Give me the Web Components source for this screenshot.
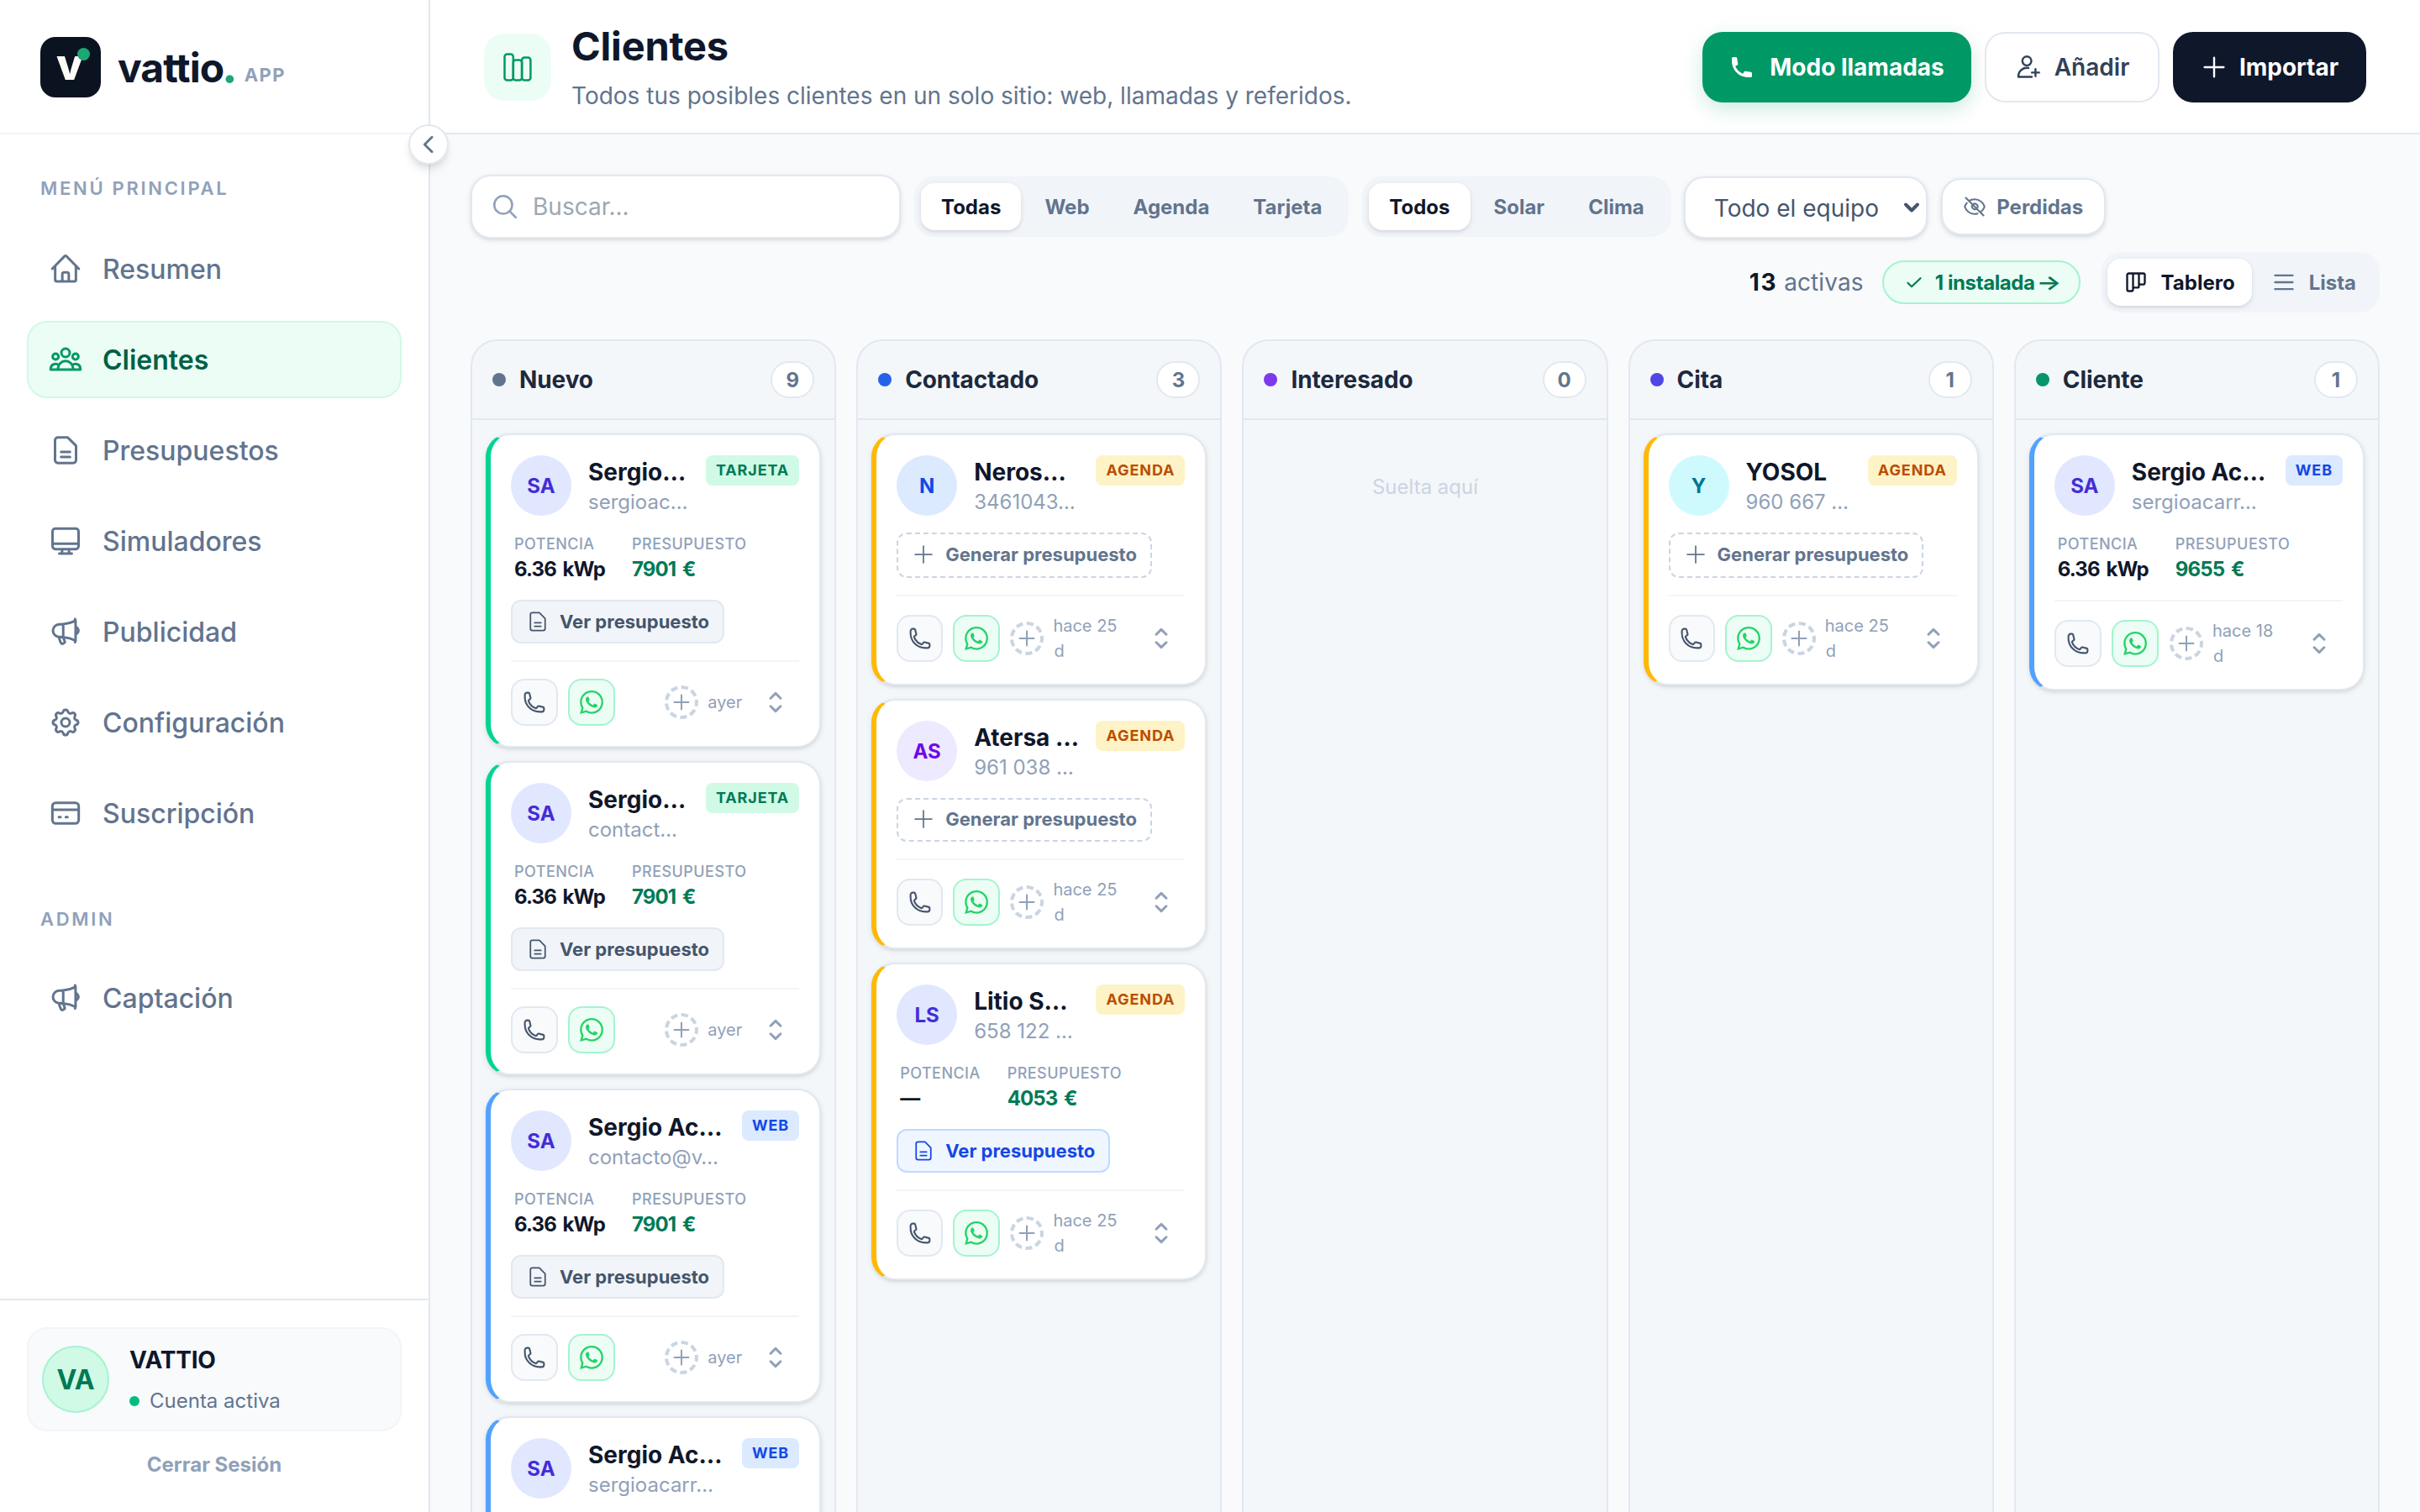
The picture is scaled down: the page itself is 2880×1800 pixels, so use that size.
<!DOCTYPE html>
<html lang="es">
<head>
<meta charset="UTF-8">
<title>Vattio App - Clientes</title>
<style>
    html, body {
        margin: 0;
        height: 100%;
    }

    body {
        background: #f8fafc;
        color: #0f172b;
        font-family: Inter, 'Liberation Sans', sans-serif;
        font-size: 28px;
        overflow: hidden;
    }
</style>
</head>
<body>
<vt-app>
    <vt-sidebar slot="sidebar">
        <vt-nav-label>MENÚ PRINCIPAL</vt-nav-label>
        <vt-nav-item icon="home">Resumen</vt-nav-item>
        <vt-nav-item icon="users" active>Clientes</vt-nav-item>
        <vt-nav-item icon="doc">Presupuestos</vt-nav-item>
        <vt-nav-item icon="monitor">Simuladores</vt-nav-item>
        <vt-nav-item icon="megaphone">Publicidad</vt-nav-item>
        <vt-nav-item icon="cog">Configuración</vt-nav-item>
        <vt-nav-item icon="card">Suscripción</vt-nav-item>
        <vt-nav-label class="admin">ADMIN</vt-nav-label>
        <vt-nav-item icon="megaphone">Captación</vt-nav-item>
    </vt-sidebar>

    <vt-header slot="header">
        <span slot="title">Clientes</span>
        <span slot="subtitle">Todos tus posibles clientes en un solo sitio: web, llamadas y referidos.</span>
        <vt-button icon="phoneSolid" kind="primary">Modo llamadas</vt-button>
        <vt-button icon="userPlus" kind="outline">Añadir</vt-button>
        <vt-button icon="plus" kind="dark">Importar</vt-button>
    </vt-header>

    <vt-toolbar slot="toolbar"></vt-toolbar>
    <vt-board slot="board"></vt-board>
</vt-app>

<script>
// iconos de trazo, todos sobre un viewBox de 24
const ICONS = {
    home: '<path d="m2.5 12 8.7-8.9a1.1 1.1 0 0 1 1.6 0L21.5 12M4.6 10v9.8c0 .7.5 1.2 1.2 1.2h12.4c.7 0 1.2-.5 1.2-1.2V10M9.7 21v-5.2c0-.7.5-1.2 1.2-1.2h2.2c.7 0 1.2.5 1.2 1.2V21"/>',
    users: '<circle cx="12" cy="7.2" r="3"/><circle cx="4.9" cy="9.9" r="2.1"/><circle cx="19.1" cy="9.9" r="2.1"/><path d="M6.6 19.2v-.7a5.4 5.4 0 0 1 10.8 0v.7zM6.6 19.2H1.4v-.6a3.5 3.5 0 0 1 5.9-2.5M17.4 19.2h5.2v-.6a3.5 3.5 0 0 0-5.9-2.5"/>',
    doc: '<path d="M13.6 2.9H6.5c-1.1 0-2 .9-2 2v14.2c0 1.1.9 2 2 2h11c1.1 0 2-.9 2-2V8.8zM8.8 13.2h6.4M8.8 16.8h6.4"/>',
    monitor: '<path d="M4.7 3.2h14.6c1.1 0 2 .9 2 2v10.6c0 1.1-.9 2-2 2H4.7c-1.1 0-2-.9-2-2V5.2c0-1.1.9-2 2-2zM2.7 14h18.6M9.8 17.8 9.2 21M14.2 17.8l.6 3.2M7.5 21h9"/>',
    megaphone: '<path d="M10.34 15.84c-.69-.06-1.39-.09-2.09-.09H7.5a4.5 4.5 0 1 1 0-9h.75c.7 0 1.4-.03 2.09-.09m0 9.18c.25.96.58 1.89.98 2.78.25.55.06 1.21-.46 1.51l-.66.38c-.55.32-1.26.12-1.52-.46a20.8 20.8 0 0 1-1.44-4.28m3.1.07V6.66m0 9.18a23.85 23.85 0 0 1 8.83 2.53M10.34 6.66a23.85 23.85 0 0 0 8.83-2.53m0 0L18.8 3m.37 1.13v14.24l-.37 1.13M19.4 8.6c1 .7 1.8 1.6 1.8 2.65s-.8 1.95-1.8 2.65"/>',
    cog: '<path d="M10.325 4.317c.426-1.756 2.924-1.756 3.35 0a1.724 1.724 0 0 0 2.573 1.066c1.543-.94 3.31.826 2.37 2.37a1.724 1.724 0 0 0 1.065 2.572c1.756.426 1.756 2.924 0 3.35a1.724 1.724 0 0 0-1.066 2.573c.94 1.543-.826 3.31-2.37 2.37a1.724 1.724 0 0 0-2.572 1.065c-.426 1.756-2.924 1.756-3.35 0a1.724 1.724 0 0 0-2.573-1.066c-1.543.94-3.31-.826-2.37-2.37a1.724 1.724 0 0 0-1.065-2.572c-1.756-.426-1.756-2.924 0-3.35a1.724 1.724 0 0 0 1.066-2.573c-.94-1.543.826-3.31 2.37-2.37.996.608 2.296.07 2.572-1.065z"/><circle cx="12" cy="12" r="3"/>',
    card: '<rect x="2.6" y="4.6" width="18.8" height="14.8" rx="2.4"/><path d="M2.6 9.6h18.8M7.2 14.8h1.2M12.2 14.8h1.2"/>',
    chevronLeft: '<path d="M15.5 19.5 8 12l7.5-7.5"/>',
    chevronDown: '<path d="m5 8.5 7 7 7-7"/>',
    plus: '<path d="M12 3.5v17M3.5 12h17"/>',
    userPlus: '<circle cx="10.6" cy="6.4" r="4"/><path d="M15 20.6H3v-.8a7.6 7.6 0 0 1 9-7.1M18.3 13.6v6.4M15.1 16.8h6.4"/>',
    search: '<circle cx="10.5" cy="10.5" r="7.5"/><path d="m21 21-5.2-5.2"/>',
    eyeOff: '<path d="M4 8.2A10.5 10.5 0 0 0 1.9 12c1.3 4.3 5.3 7.5 10.1 7.5 1 0 2-.1 2.9-.4M6.2 6.2A10.4 10.4 0 0 1 12 4.5c4.8 0 8.8 3.2 10.1 7.5a10.5 10.5 0 0 1-4.3 5.8M3 3l18 18M9.9 9.9a3 3 0 0 0 4.2 4.2M9.9 9.9a3 3 0 0 1 4.9 3.3"/>',
    check: '<path d="m4.5 12.7 4.5 4.5 10.5-10"/>',
    board: '<path d="M4.5 3h15A1.5 1.5 0 0 1 21 4.5v8.2a1.5 1.5 0 0 1-1.5 1.5h-3a1.5 1.5 0 0 1-1.5-1.5V3v13a1.5 1.5 0 0 1-1.5 1.5h-3A1.5 1.5 0 0 1 9 16V3v16.5A1.5 1.5 0 0 1 7.5 21h-3A1.5 1.5 0 0 1 3 19.5v-15A1.5 1.5 0 0 1 4.5 3z"/>',
    list: '<path d="M3 5h18M3 12h18M3 19h18"/>',
    phone: '<path d="M2.25 6.75c0 8.284 6.716 15 15 15h2.25a2.25 2.25 0 0 0 2.25-2.25v-1.372c0-.516-.351-.966-.852-1.091l-4.423-1.106c-.44-.11-.902.055-1.173.417l-.97 1.293c-.282.376-.769.542-1.21.38a12.035 12.035 0 0 1-7.143-7.143c-.162-.441.004-.928.38-1.21l1.293-.97c.363-.271.527-.734.417-1.173L6.963 3.102a1.125 1.125 0 0 0-1.091-.852H4.5A2.25 2.25 0 0 0 2.25 4.5z"/>',
    phoneSolid: '<path fill="currentColor" stroke="none" transform="scale(1.2)" d="M2 3a1 1 0 0 1 1-1h2.153a1 1 0 0 1 .986.836l.74 4.435a1 1 0 0 1-.54 1.06l-1.548.773a11.037 11.037 0 0 0 6.105 6.105l.774-1.548a1 1 0 0 1 1.059-.54l4.435.74a1 1 0 0 1 .836.986V17a1 1 0 0 1-1 1h-2C7.82 18 2 12.18 2 5z"/>',
    whatsapp: '<path fill="currentColor" stroke="none" d="M17.472 14.382c-.297-.149-1.758-.867-2.03-.967-.273-.099-.471-.148-.67.15-.197.297-.767.966-.94 1.164-.173.199-.347.223-.644.075-.297-.15-1.255-.463-2.39-1.475-.883-.788-1.48-1.761-1.653-2.059-.173-.297-.018-.458.13-.606.134-.133.298-.347.446-.52.149-.174.198-.298.298-.497.099-.198.05-.371-.025-.52-.075-.149-.669-1.612-.916-2.207-.242-.579-.487-.5-.669-.51-.173-.008-.371-.01-.57-.01-.198 0-.52.074-.792.372-.272.297-1.04 1.016-1.04 2.479 0 1.462 1.065 2.875 1.213 3.074.149.198 2.096 3.2 5.077 4.487.709.306 1.262.489 1.694.625.712.227 1.36.195 1.871.118.571-.085 1.758-.719 2.006-1.413.248-.694.248-1.289.173-1.413-.074-.124-.272-.198-.57-.347m-5.421 7.403h-.004a9.87 9.87 0 0 1-5.031-1.378l-.361-.214-3.741.982.998-3.648-.235-.374a9.86 9.86 0 0 1-1.51-5.26c.001-5.45 4.436-9.884 9.888-9.884 2.64 0 5.122 1.03 6.988 2.898a9.825 9.825 0 0 1 2.893 6.994c-.003 5.45-4.437 9.884-9.885 9.884m8.413-18.297A11.815 11.815 0 0 0 12.05 0C5.495 0 .16 5.335.157 11.892c0 2.096.547 4.142 1.588 5.945L.057 24l6.305-1.654a11.882 11.882 0 0 0 5.683 1.448h.005c6.554 0 11.89-5.335 11.893-11.893a11.821 11.821 0 0 0-3.48-8.413z"/>',
    upDown: '<path d="M8.25 15 12 18.75 15.75 15m-7.5-6L12 5.25 15.75 9"/>'
};

function icon(name, size, stroke = 1.5) {
    return `<svg width="${size}" height="${size}" viewBox="0 0 24 24" fill="none" stroke="currentColor" stroke-width="${stroke}" stroke-linecap="round" stroke-linejoin="round" style="display:block;flex:none">${ICONS[name]}</svg>`;
}

class VtElement extends HTMLElement {
    constructor() {
        super();
        this.attachShadow({ mode: 'open' });
    }

    connectedCallback() {
        this.shadowRoot.innerHTML = `<style>*{box-sizing:border-box}${this.styles()}</style>${this.markup()}`;
    }
}

// ---------- estructura ----------
class VtApp extends VtElement {
    styles() {
        return `
            :host { display: grid; grid-template-columns: 512px 1fr; height: 1800px; width: 2880px; overflow: hidden; }
            main { display: flex; flex-direction: column; min-width: 0; height: 1800px; }
            .content { flex: 1; min-height: 0; display: flex; flex-direction: column; gap: 32px; padding: 48px 48px 0; }
        `;
    }

    markup() {
        return `
            <slot name="sidebar"></slot>
            <main>
                <slot name="header"></slot>
                <div class="content">
                    <slot name="toolbar"></slot>
                    <slot name="board"></slot>
                </div>
            </main>
        `;
    }
}

class VtSidebar extends VtElement {
    styles() {
        return `
            :host { display: flex; flex-direction: column; position: relative; box-sizing: border-box; height: 1800px; background: #fff; border-right: 2px solid #e2e8f0; }
            .brand { height: 160px; flex: none; display: flex; align-items: center; padding: 2px 0 0 48px; border-bottom: 2px solid #f1f5f9; }
            .mark { position: relative; width: 72px; height: 72px; border-radius: 18px; background: #0b1320; color: #fdfdf8; margin-right: 20px; }
            .mark b { position: absolute; left: 19px; top: 7px; font-size: 52px; line-height: 52px; font-weight: 800; }
            .mark i { position: absolute; left: 44px; top: 13px; width: 15px; height: 15px; border-radius: 50%; background: #1aa873; }
            .word { font-size: 48px; line-height: 60px; font-weight: 700; letter-spacing: -1px; }
            .word em { font-style: normal; font-size: 56px; line-height: 1; margin-left: -2px; color: #1aa873; }
            .app { font-size: 22px; font-weight: 700; letter-spacing: 1.4px; color: #90a1b9; margin: 17px 0 0 9px; }
            .toggle { position: absolute; left: 486px; top: 148px; width: 48px; height: 48px; border-radius: 50%; border: 2px solid #e2e8f0; background: #fff; color: #62748e; display: grid; place-items: center; box-shadow: 0 8px 12px -2px rgba(0,0,0,.1), 0 4px 8px -4px rgba(0,0,0,.1); z-index: 2; }
            nav { flex: 1; display: flex; flex-direction: column; gap: 16px; padding: 46px 32px 0; }
            footer { border-top: 2px solid #e2e8f0; height: 254px; padding: 32px 32px 0; }
            .account { display: flex; align-items: center; gap: 24px; height: 124px; padding: 0 16px; border: 2px solid #f1f5f9; border-radius: 24px; background: #f8fafc; }
            .avatar { width: 80px; height: 80px; border-radius: 50%; border: 2px solid #a4f4cf; background: #d0fae5; color: #007a55; display: grid; place-items: center; font-size: 32px; font-weight: 700; }
            .name { font-size: 28px; line-height: 42px; font-weight: 700; letter-spacing: -.2px; }
            .state { display: flex; align-items: center; gap: 12px; margin-top: 10px; font-size: 24px; line-height: 36px; color: #62748e; }
            .state i { width: 12px; height: 12px; border-radius: 50%; background: #00bc7d; }
            .logout { margin-top: 22px; text-align: center; font-size: 24px; line-height: 36px; font-weight: 700; color: #90a1b9; }
        `;
    }

    markup() {
        return `
            <div class="brand">
                <div class="mark"><b>v</b><i></i></div>
                <div class="word">vattio<em>.</em></div>
                <div class="app">APP</div>
            </div>
            <div class="toggle">${icon('chevronLeft', 28, 2.4)}</div>
            <nav><slot></slot></nav>
            <footer>
                <div class="account">
                    <div class="avatar">VA</div>
                    <div>
                        <div class="name">VATTIO</div>
                        <div class="state"><i></i>Cuenta activa</div>
                    </div>
                </div>
                <div class="logout">Cerrar Sesión</div>
            </footer>
        `;
    }
}

class VtNavLabel extends VtElement {
    styles() {
        return `
            :host { display: block; padding-left: 16px; height: 36px; margin-bottom: 16px; font-size: 22px; line-height: 36px; font-weight: 600; letter-spacing: 2.7px; color: #90a1b9; }
            :host(.admin) { margin-top: 46px; margin-bottom: 14px; }
        `;
    }

    markup() {
        return '<slot></slot>';
    }
}

class VtNavItem extends VtElement {
    styles() {
        return `
            :host { display: flex; align-items: center; gap: 24px; box-sizing: border-box; height: 92px; padding-left: 24px; border: 2px solid transparent; border-radius: 24px; font-size: 32px; font-weight: 500; color: #62748e; }
            :host([active]) { background: #ecfdf5; border-color: #d0fae5; color: #006045; font-weight: 600; }
            :host([active]) svg { color: #009966; }
        `;
    }

    markup() {
        return `${icon(this.getAttribute('icon'), 40, 1.8)}<slot></slot>`;
    }
}

// ---------- cabecera ----------
class VtHeader extends VtElement {
    styles() {
        return `
            :host { display: flex; align-items: center; box-sizing: border-box; flex: none; height: 160px; padding: 2px 64px 0; background: #fff; border-bottom: 2px solid #e2e8f0; }
            .tile { width: 80px; height: 80px; border-radius: 24px; background: #ecfdf5; color: #009966; display: grid; place-items: center; margin-right: 24px; }
            .titles { flex: 1; }
            .title { display: block; font-size: 47px; line-height: 60px; font-weight: 700; letter-spacing: -.2px; margin-top: -1px; }
            .sub { display: block; margin-top: 8px; font-size: 28px; line-height: 42px; color: #62748e; }
            .actions { display: flex; gap: 16px; }
        `;
    }

    markup() {
        return `
            <div class="tile">
                <svg width="40" height="40" viewBox="0 0 40 40" fill="none" stroke="currentColor" stroke-width="2.5">
                    <rect x="4.5" y="4.5" width="10.3" height="31" rx="3"/>
                    <rect x="14.8" y="11.5" width="10.3" height="24" rx="3"/>
                    <rect x="25.1" y="8.5" width="10.3" height="27" rx="3"/>
                </svg>
            </div>
            <div class="titles">
                <slot name="title" class="title"></slot>
                <slot name="subtitle" class="sub"></slot>
            </div>
            <div class="actions"><slot></slot></div>
        `;
    }
}

class VtButton extends VtElement {
    styles() {
        return `
            :host { display: flex; align-items: center; justify-content: center; box-sizing: border-box; gap: 16px; height: 84px; border-radius: 24px; font-size: 28px; font-weight: 600; }
            :host([kind=primary]) { width: 320px; gap: 18px; background: #009966; color: #fff; font-weight: 700; box-shadow: 0 8px 24px rgba(0,153,102,.2); }
            :host([kind=outline]) { width: 208px; gap: 15px; background: #fff; border: 2px solid #e2e8f0; color: #314158; }
            :host([kind=dark]) { width: 230px; gap: 14px; background: #0f172b; color: #fff; font-weight: 700; }
        `;
    }

    markup() {
        return `${icon(this.getAttribute('icon'), this.getAttribute('kind') === 'primary' ? 30 : 32, 1.8)}<slot></slot>`;
    }
}

// ---------- filtros ----------
class VtSegmented extends VtElement {
    styles() {
        return `
            :host { display: flex; gap: 4px; box-sizing: border-box; height: 72px; padding: 8px; border-radius: 24px; background: #f1f5f9; }
            span { display: flex; align-items: center; gap: 16px; padding: 0 24px; border-radius: 16px; font-size: 24px; font-weight: 700; color: #62748e; }
            :host([icons]) span { padding: 0 20px; }
            .on { background: #fff; color: #0f172b; box-shadow: 0 2px 6px rgba(0,0,0,.1), 0 2px 4px -2px rgba(0,0,0,.1); }
        `;
    }

    markup() {
        const icons = (this.getAttribute('icons') || '').split(',');
        return this.getAttribute('options').split(',').map((label, i) =>
            `<span class="${i === 0 ? 'on' : ''}">${icons[i] ? icon(icons[i], 28, 2) : ''}${label}</span>`
        ).join('');
    }
}

class VtToolbar extends VtElement {
    styles() {
        return `
            :host { display: flex; flex-direction: column; gap: 16px; flex: none; }
            .row { display: flex; align-items: center; gap: 16px; height: 76px; }
            .row.end { justify-content: flex-end; height: 72px; }
            .box { display: flex; align-items: center; background: #fff; border: 2px solid #e2e8f0; border-radius: 24px; box-shadow: 0 2px 6px rgba(0,0,0,.1), 0 2px 4px -2px rgba(0,0,0,.1); }
            .search { width: 512px; height: 76px; padding-left: 22px; gap: 16px; color: #90a1b9; }
            .search span { color: #9ca8b4; }
            .team { width: 290px; height: 74px; padding: 2px 5px 0 34px; justify-content: space-between; color: #45556c; margin: 2px 0 0 -1px; }
            .team svg { margin-top: -2px; }
            .lost { width: 196px; height: 68px; gap: 12px; justify-content: center; font-size: 24px; font-weight: 700; color: #62748e; }
            .count { color: #62748e; margin-right: 6px; letter-spacing: .1px; }
            .count b { color: #0f172b; font-weight: 700; letter-spacing: 1.6px; }
            .done { display: flex; align-items: center; justify-content: center; width: 236px; height: 52px; border-radius: 26px; border: 2px solid #a4f4cf; background: #ecfdf5; color: #007a55; font-size: 24px; font-weight: 700; margin-right: 8px; }
            .done svg { margin-right: 13px; }
            .done span { letter-spacing: -.4px; margin-right: 5px; }
            .done em { font-style: normal; font-weight: 600; transform: scaleX(1.3); }
        `;
    }

    markup() {
        return `
            <div class="row">
                <div class="box search">${icon('search', 34, 1.8)}<span>Buscar...</span></div>
                <vt-segmented options="Todas,Web,Agenda,Tarjeta"></vt-segmented>
                <vt-segmented options="Todos,Solar,Clima"></vt-segmented>
                <div class="box team">Todo el equipo${icon('chevronDown', 24, 4)}</div>
                <div class="box lost">${icon('eyeOff', 28, 1.8)}Perdidas</div>
            </div>
            <div class="row end">
                <div class="count"><b>13</b> activas</div>
                <div class="done">${icon('check', 24, 2.2)}<span>1 instalada</span><em>→</em></div>
                <vt-segmented options="Tablero,Lista" icons="board,list"></vt-segmented>
            </div>
        `;
    }
}

// ---------- tablero ----------
const SERGIO = { initials: 'SA', tint: 'indigo', kwp: '6.36 kWp', price: '7901 €', action: 'view', ago: 'ayer' };
const AGENDA = { source: 'AGENDA', action: 'new', ago: 'hace 25 d' };

const COLUMNS = [
    { name: 'Nuevo', color: '#62748e', count: 9, cards: [
        { ...SERGIO, name: 'Sergio…', contact: 'sergioac…', source: 'TARJETA' },
        { ...SERGIO, name: 'Sergio…', contact: 'contact…', source: 'TARJETA' },
        { ...SERGIO, name: 'Sergio Ac…', contact: 'contacto@v…', source: 'WEB' },
        { ...SERGIO, name: 'Sergio Ac…', contact: 'sergioacarr…', source: 'WEB' }
    ] },
    { name: 'Contactado', color: '#2563eb', count: 3, cards: [
        { ...AGENDA, initials: 'N', tint: 'blue', name: 'Neros…', contact: '3461043…' },
        { ...AGENDA, initials: 'AS', tint: 'violet', name: 'Atersa …', contact: '961 038 …', compact: true },
        { ...AGENDA, initials: 'LS', tint: 'indigo', name: 'Litio S…', contact: '658 122 …', kwp: '—', price: '4053 €', action: 'sent' }
    ] },
    { name: 'Interesado', color: '#7c3aed', count: 0, cards: [] },
    { name: 'Cita', color: '#4f46e5', count: 1, cards: [
        { ...AGENDA, initials: 'Y', tint: 'cyan', name: 'YOSOL', contact: '960 667 …' }
    ] },
    { name: 'Cliente', color: '#059669', count: 1, cards: [
        { ...SERGIO, name: 'Sergio Ac…', contact: 'sergioacarr…', source: 'WEB', price: '9655 €', action: '', ago: 'hace 18 d' }
    ] }
];

const TINTS = {
    indigo: ['#e0e7ff', '#432dd7'],
    blue: ['#dbeafe', '#1447e6'],
    violet: ['#ede9fe', '#7008e7'],
    cyan: ['#cefafe', '#007595']
};

const SOURCES = {
    TARJETA: ['#d0fae5', '#007a55', '#00d492'],
    WEB: ['#dbeafe', '#1447e6', '#51a2ff'],
    AGENDA: ['#fef3c6', '#bb4d00', '#ffb900']
};

class VtCard extends VtElement {
    styles() {
        const c = this.data;
        const [tintBg, tintInk] = TINTS[c.tint];
        const [tagBg, tagInk, edge] = SOURCES[c.source];
        return `
            :host { display: block; flex: none; box-sizing: border-box; padding: 24px; background: #fff; border: 2px solid #e2e8f0; border-left: 6px solid ${edge}; border-radius: 28px; box-shadow: 0 2px 6px rgba(0,0,0,.1), 0 2px 4px -2px rgba(0,0,0,.1); white-space: nowrap; }
            .top { display: flex; align-items: flex-start; height: 72px; }
            .avatar { flex: none; width: 72px; height: 72px; margin-right: 20px; border-radius: 50%; display: grid; place-items: center; background: ${tintBg}; color: ${tintInk}; font-size: 24px; font-weight: 700; }
            .who { flex: 1; min-width: 0; padding-top: 2px; }
            .name { font-size: 28px; line-height: 36px; font-weight: 700; }
            .contact { font-size: 24px; line-height: 36px; color: #90a1b9; }
            .tag { height: 36px; padding: 0 12px; border-radius: 8px; background: ${tagBg}; color: ${tagInk}; font-size: 18px; line-height: 35px; font-weight: 700; letter-spacing: .9px; }
            .metrics { display: flex; gap: 32px; height: 60px; margin-top: 20px; padding-left: 4px; }
            .metrics small { display: block; font-size: 18px; line-height: 27px; font-weight: 500; letter-spacing: .45px; color: #90a1b9; }
            .metrics b { display: block; font-size: 24px; line-height: 33px; font-weight: 700; letter-spacing: -.9px; word-spacing: 3px; }
            .metrics .price { color: #007a55; }
            .action { display: flex; align-items: center; gap: 12px; width: fit-content; height: 52px; margin-top: 20px; padding: 0 16px; border-radius: 12px; border: 2px solid #e2e8f0; background: #f1f5f9; color: #45556c; font-size: 22px; font-weight: 700; }
            .action.sent { background: #eff6ff; border-color: #bedbff; color: #1447e6; }
            .action.new { height: ${c.compact ? 52 : 54}px; padding-bottom: 2px; background: none; border: 2px dashed #cad5e2; color: #62748e; }
            .foot { display: flex; align-items: center; gap: 12px; margin-top: 20px; padding-top: 20px; border-top: 2px solid #f1f5f9; }
            .sq { width: 56px; height: 56px; border-radius: 16px; border: 2px solid #e2e8f0; background: #f8fafc; color: #45556c; display: flex; align-items: center; justify-content: center; min-width: 0; }
            .sq.wa { flex: none; background: #ecfdf5; border-color: #a4f4cf; color: #25d366; }
            .add { flex: none; width: 40px; height: 40px; margin-left: auto; border-radius: 50%; border: 4px dashed #cad5e2; color: #90a1b9; display: grid; place-items: center; }
            .ago { flex: none; font-size: 20px; line-height: 30px; color: #90a1b9; white-space: normal; text-indent: -1px; }
            .move { flex: none; width: 56px; display: grid; place-items: center; color: #90a1b9; }
        `;
    }

    markup() {
        const c = this.data;
        const agoWidth = { 'hace 25 d': '88px', 'hace 18 d': '86px' }[c.ago] || 'auto';
        const actions = {
            view: `<div class="action">${icon('doc', 28)}Ver presupuesto</div>`,
            sent: `<div class="action sent">${icon('doc', 28)}Ver presupuesto</div>`,
            new: `<div class="action new">${icon('plus', 28)}Generar presupuesto</div>`
        };
        return `
            <div class="top">
                <div class="avatar">${c.initials}</div>
                <div class="who">
                    <div class="name">${c.name}</div>
                    <div class="contact">${c.contact}</div>
                </div>
                <div class="tag">${c.source}</div>
            </div>
            ${c.kwp ? `
            <div class="metrics">
                <div><small>POTENCIA</small><b>${c.kwp}</b></div>
                <div><small>PRESUPUESTO</small><b class="price">${c.price}</b></div>
            </div>` : ''}
            ${actions[c.action] || ''}
            <div class="foot">
                <div class="sq">${icon('phone', 28, 1.8)}</div>
                <div class="sq wa">${icon('whatsapp', 28)}</div>
                <div class="add">${icon('plus', 24, 2)}</div>
                <div class="ago" style="width:${agoWidth}">${c.ago}</div>
                <div class="move">${icon('upDown', 38, 1.9)}</div>
            </div>
        `;
    }
}

class VtColumn extends VtElement {
    styles() {
        return `
            :host { display: flex; flex-direction: column; box-sizing: border-box; min-width: 0; height: 1460px; background: #f4f7fa; border: 2px solid #e2e8f0; border-radius: 32px; overflow: hidden; }
            header { display: flex; align-items: center; flex: none; height: 94px; padding: 0 24px; border-bottom: 2px solid #e2e8f0; }
            header i { width: 16px; height: 16px; border-radius: 50%; background: ${this.data.color}; margin-right: 16px; }
            header b { flex: 1; font-size: 28px; font-weight: 700; letter-spacing: -.1px; color: #1d293d; }
            header span { width: 52px; height: 44px; border-radius: 22px; border: 2px solid #e2e8f0; background: #fff; color: #62748e; display: grid; place-items: center; font-size: 24px; font-weight: 700; }
            .list { display: flex; flex-direction: column; gap: 16px; padding: 16px; }
            .empty { padding-top: 46px; text-align: center; font-size: 24px; line-height: 36px; color: #cad5e2; }
        `;
    }

    markup() {
        return `
            <header><i></i><b>${this.data.name}</b><span>${this.data.count}</span></header>
            <div class="list">${this.data.cards.length ? '' : '<div class="empty">Suelta aquí</div>'}</div>
        `;
    }

    connectedCallback() {
        super.connectedCallback();
        const list = this.shadowRoot.querySelector('.list');
        for (const data of this.data.cards) {
            const card = document.createElement('vt-card');
            card.data = data;
            list.append(card);
        }
    }
}

class VtBoard extends VtElement {
    styles() {
        return ':host { display: grid; grid-template-columns: repeat(5, minmax(0, 1fr)); gap: 24px; min-height: 0; }';
    }

    markup() {
        return '';
    }

    connectedCallback() {
        super.connectedCallback();
        for (const data of COLUMNS) {
            const column = document.createElement('vt-column');
            column.data = data;
            this.shadowRoot.append(column);
        }
    }
}

customElements.define('vt-app', VtApp);
customElements.define('vt-sidebar', VtSidebar);
customElements.define('vt-nav-label', VtNavLabel);
customElements.define('vt-nav-item', VtNavItem);
customElements.define('vt-header', VtHeader);
customElements.define('vt-button', VtButton);
customElements.define('vt-segmented', VtSegmented);
customElements.define('vt-toolbar', VtToolbar);
customElements.define('vt-card', VtCard);
customElements.define('vt-column', VtColumn);
customElements.define('vt-board', VtBoard);
</script>
</body>
</html>
